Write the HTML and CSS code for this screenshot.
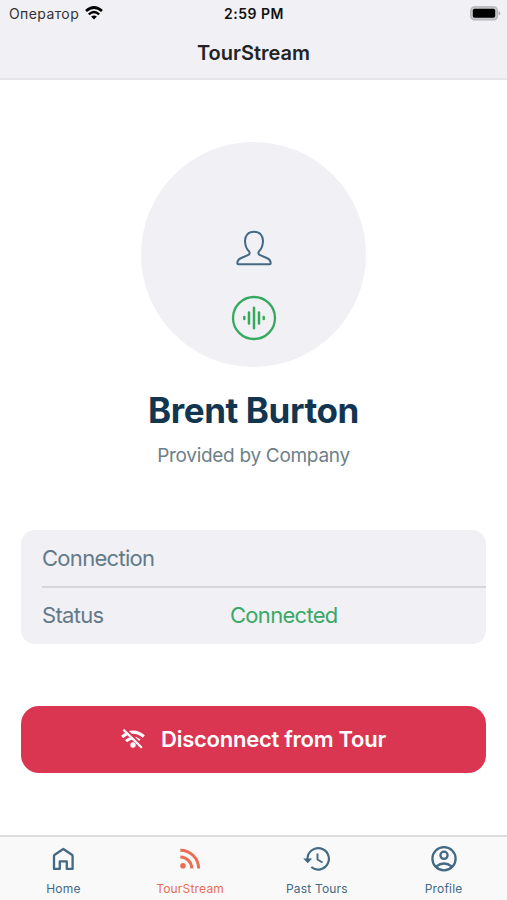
FILE: index.html
```html
<!DOCTYPE html>
<html lang="en">
<head>
<meta charset="utf-8">
<title>TourStream</title>
<link rel="stylesheet" href="styles.css">
</head>
<body>
<div class="screen">
  <header class="header">
    <div class="statusbar">
      <div class="carrier"><span class="carrier-name">Оператор</span>
        <svg class="wifi" viewBox="0 0 18 14" fill="none" stroke="#000"><path d="M1 5.1Q9-2.1 17 5.1" stroke-width="2.7"/><path d="M3.8 8.3Q9 3.7 14.2 8.3" stroke-width="2.4"/><path d="M6.1 10.6Q9 8.2 11.9 10.6L9 13.6Z" fill="#000" stroke="none"/></svg>
      </div>
      <time class="clock">2:59 PM</time>
      <div class="power"><svg class="battery" viewBox="0 0 31 15"><rect x=".8" y=".8" width="26.6" height="13" rx="3.8" fill="#c8c8ca" stroke="#b4b4b6" stroke-width="1.3"/><rect x="2.8" y="2.8" width="22.4" height="9" rx="1.8" fill="#000"/><path d="M28.6 5v4.6q1.7-.8 1.7-2.3T28.6 5Z" fill="#aaaaac"/></svg></div>
    </div>
    <h1 class="title">TourStream</h1>
  </header>
  <main class="content">
    <div class="avatar">
      <svg class="person" viewBox="0 0 36 36" fill="none" stroke="#426985" stroke-width="2" stroke-linejoin="round"><path d="M18 1.800C12.200 1.800 8.900 5.500 9 11c.1 4.600 1.500 8 4 10.300 1.200 1.600.7 3-1.100 3.800L5.300 28C2.500 29.200 1.300 30.700 1.300 33.200Q1.300 34.200 2.300 34.200H33.700Q34.700 34.200 34.700 33.200C34.700 30.700 33.500 29.200 30.700 28L24.100 25.100C22.300 24.300 21.800 22.900 23 21.300 25.500 19 26.900 15.600 27 11 27.100 5.500 23.800 1.800 18 1.800Z"/></svg>
      <svg class="wave" viewBox="0 0 46 46" fill="none" stroke="#36a95f" stroke-linecap="round"><circle cx="23" cy="23" r="21" stroke-width="2.300"/><path d="M13.300 22v2M18 17.500v11M23 12.700v20.600M28 17.500v11M32.700 22v2" stroke-width="2.500"/></svg>
    </div>
    <h2 class="name">Brent Burton</h2>
    <p class="provider">Provided by Company</p>
    <dl class="card">
      <div class="row"><dt>Connection</dt><dd></dd></div>
      <div class="row"><dt>Status</dt><dd class="connected">Connected</dd></div>
    </dl>
    <button class="disconnect">
      <svg class="nowifi" viewBox="0 0 24 20" fill="none" stroke="#fff"><path d="M1.200 8Q12-1.500 22.800 7.500" stroke-width="3.200"/><path d="M5 12.200Q12 6 18.500 11.700" stroke-width="3"/><circle cx="12" cy="16" r="2.700" fill="#fff" stroke="none"/><path d="M4.300-.3 22.300 17.500" stroke="#da3651" stroke-width="2"/><path d="M2.400.7 20.800 18.800" stroke-width="2.200"/></svg>
      <span>Disconnect from Tour</span>
    </button>
  </main>
  <nav class="tabs">
    <a class="tab"><svg viewBox="0 0 28 28" fill="none" stroke="currentColor" stroke-width="2.300" stroke-linejoin="round"><path d="M5 11Q5 10.200 5.700 9.700L14.300 4l8.600 5.700q.7.500.7 1.300v12.900h-5.800v-7.600h-7v7.600H5Z"/></svg><span>Home</span></a>
    <a class="tab active"><svg viewBox="0 0 28 28" fill="none" stroke="currentColor" stroke-width="2.900"><path d="M4.300 5.200A18.300 18.300 0 0 1 22.600 23.500M4.300 12A11.500 11.500 0 0 1 15.800 23.500"/><circle cx="7" cy="20.800" r="2.800" fill="currentColor" stroke="none"/></svg><span>TourStream</span></a>
    <a class="tab"><svg viewBox="0 0 28 28" fill="none" stroke="currentColor" stroke-width="2.200"><path d="M4.500 14A10.700 10.700 0 1 1 8.300 22"/><path d="M.2 13.500h9L4.700 18.300Z" fill="currentColor" stroke="none"/><path d="M14.500 8.500v6l5 3" stroke-width="1.900"/></svg><span>Past Tours</span></a>
    <a class="tab"><svg viewBox="0 0 28 28" fill="none" stroke="currentColor" stroke-width="2.300"><circle cx="14" cy="13.700" r="11.600"/><circle cx="14" cy="10.300" r="3.600"/><path d="M6 21.700Q14 15.300 22 21.700"/></svg><span>Profile</span></a>
  </nav>
</div>
</body>
</html>
```
FILE: styles.css
```css
* { box-sizing: border-box; }
body { margin: 0; font-family: Inter, "Liberation Sans", sans-serif; background: #fff; }
h1, h2, p, dl, dt, dd { margin: 0; }
svg { display: block; flex: none; }
.screen { width: 507px; height: 900px; display: flex; flex-direction: column; overflow: hidden; }
.header { height: 80px; background: #f1f0f5; border-bottom: 2px solid #e6e6e9; }
.statusbar { height: 27px; display: grid; grid-template-columns: 1fr auto 1fr; align-items: center; padding: 0 6px 0 9px; color: #111; }
.carrier { display: flex; align-items: center; gap: 6px; font-size: 14px; letter-spacing: .4px; color: #333; }
.wifi { width: 18px; height: 14px; margin-top: -1px; }
.clock { font-size: 14px; font-weight: 600; line-height: 27px; letter-spacing: .5px; margin-left: -2px; }
.power { display: flex; justify-content: flex-end; }
.battery { width: 31px; height: 15px; }
.title { font-size: 20px; line-height: 52px; font-weight: 600; text-align: center; color: #222327; }
.content { flex: 1; display: flex; flex-direction: column; align-items: center; padding: 62px 21px 0; }
.avatar { width: 225px; height: 225px; border-radius: 50%; background: #f1f0f5; display: flex; flex-direction: column; align-items: center; padding-top: 88px; gap: 29px; }
.person { width: 36px; height: 36px; }
.wave { width: 46px; height: 46px; }
.name { margin-top: 21px; font-size: 35px; line-height: 44px; font-weight: 700; letter-spacing: -.42px; color: #123550; }
.provider { margin-top: 11px; font-size: 19px; line-height: 26px; letter-spacing: -.3px; color: #6d7f89; }
.card { width: 100%; height: 114px; margin-top: 61px; padding-left: 21px; border-radius: 14px; background: #f1f0f5; font-size: 22px; letter-spacing: -.7px; color: #627a88; }
.row { height: 56px; display: grid; grid-template-columns: 188px 1fr; align-items: center; }
.row + .row { border-top: 2px solid #d6d6da; }
.connected { color: #3aa966; }
.disconnect { width: 100%; height: 67px; margin-top: 62px; padding: 0 0 2px; border: 0; border-radius: 18px; background: #da3651; color: #fff; font: 600 22px/30px Inter, "Liberation Sans", sans-serif; letter-spacing: -.25px; display: flex; justify-content: center; align-items: center; gap: 16px; }
.nowifi { width: 24px; height: 20px; }
.tabs { height: 65px; display: grid; grid-template-columns: repeat(4, 1fr); border-top: 2px solid #dedede; background: #f9f9f9; }
.tab { display: flex; flex-direction: column; align-items: center; padding-top: 8px; gap: 8px; color: #426985; font-size: 12px; line-height: 16px; letter-spacing: .2px; }
.tab svg { width: 28px; height: 28px; }
.tab.active { color: #e96e55; }
```
